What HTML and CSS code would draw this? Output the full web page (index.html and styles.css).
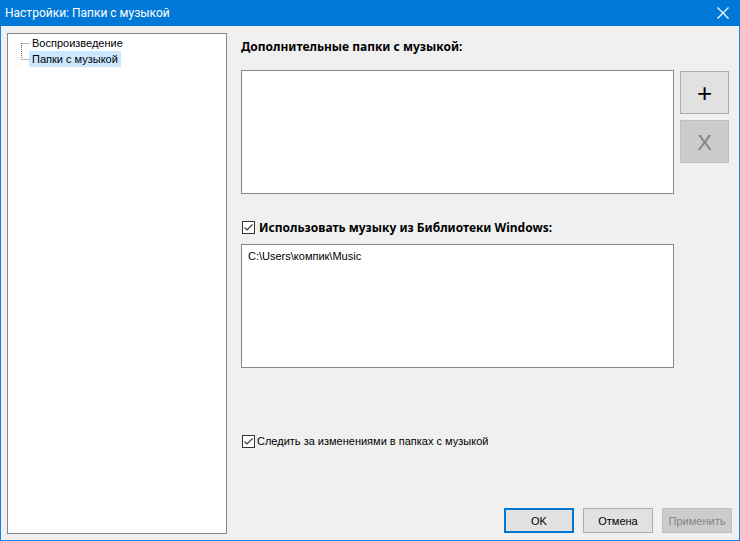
FILE: index.html
```html
<!DOCTYPE html>
<html lang="ru">
<head>
<meta charset="utf-8">
<title>Настройки: Папки с музыкой</title>
<link rel="stylesheet" href="styles.css">
</head>
<body>
<div class="window">
  <div class="titlebar">
    <span class="title">Настройки: Папки с музыкой</span>
    <svg class="close" width="12" height="12" viewBox="0 0 12 12"><path d="M0.5 0.5 L11.5 11.5 M11.5 0.5 L0.5 11.5" stroke="#fff" stroke-width="1.2" fill="none"/></svg>
  </div>
  <div class="content">
    <div class="tree">
      <svg class="tree-lines" width="30" height="40" viewBox="0 0 30 40"><path d="M13.5 9 V25 M13.5 9.5 H22 M13.5 25.5 H22" stroke="#666" stroke-width="1" stroke-dasharray="1 1" fill="none"/></svg>
      <div class="tree-item">Воспроизведение</div>
      <div class="tree-item selected">Папки с музыкой</div>
    </div>
    <div class="main">
      <div class="heading">Дополнительные папки с музыкой:</div>
      <div class="list-row">
        <div class="listbox"></div>
        <div class="side-buttons">
          <div class="sq-btn">+</div>
          <div class="sq-btn disabled">X</div>
        </div>
      </div>
      <div class="check-row bold">
        <svg class="check" width="13" height="13" viewBox="0 0 13 13"><rect x="0.5" y="0.5" width="12" height="12" fill="#fff" stroke="#333"/><path d="M2.5 6.5 L5 9 L10.5 3.5" stroke="#333" stroke-width="1.1" fill="none"/></svg>
        <span>Использовать музыку из Библиотеки Windows:</span>
      </div>
      <div class="listbox second">
        <div class="path">C:\Users\компик\Music</div>
      </div>
      <div class="check-row small">
        <svg class="check" width="13" height="13" viewBox="0 0 13 13"><rect x="0.5" y="0.5" width="12" height="12" fill="#fff" stroke="#333"/><path d="M2.5 6.5 L5 9 L10.5 3.5" stroke="#333" stroke-width="1.1" fill="none"/></svg>
        <span>Следить за изменениями в папках с музыкой</span>
      </div>
      <div class="footer">
        <div class="btn default">OK</div>
        <div class="btn">Отмена</div>
        <div class="btn disabled">Применить</div>
      </div>
    </div>
  </div>
</div>
</body>
</html>
```
FILE: styles.css
```css
html, body {
  margin: 0;
  padding: 0;
  background: #f0f0f0;
}
body {
  font-family: "Liberation Sans", Arial, sans-serif;
  font-size: 11px;
  color: #000;
}
.window {
  width: 740px;
  height: 541px;
  box-sizing: border-box;
  border: 1px solid #1883d7;
  border-top: none;
  display: flex;
  flex-direction: column;
  background: #f0f0f0;
}
.titlebar {
  height: 26px;
  background: #0078d7;
  margin: 0 -1px;
  display: flex;
  align-items: center;
  padding: 0 11px 0 5px;
  color: #fff;
}
.title {
  flex: 1;
  font-family: Roboto, "Noto Sans", sans-serif;
  font-size: 12px;
  line-height: 26px;
}
.close {
  display: block;
}
.content {
  flex: 1;
  display: flex;
  padding: 7px 7px 0 6px;
}
.tree {
  position: relative;
  width: 220px;
  height: 501px;
  box-sizing: border-box;
  border: 1px solid #828790;
  background: #fff;
  padding: 1px 0 0 21px;
}
.tree-lines {
  position: absolute;
  left: 0;
  top: 0;
}
.tree-item {
  height: 16px;
  line-height: 16px;
  padding: 0 3px;
  display: table;
  white-space: nowrap;
}
.tree-item.selected {
  background: #cce8ff;
}
.main {
  width: 491px;
  margin-left: 14px;
  display: flex;
  flex-direction: column;
  height: 501px;
}
.heading {
  font-family: "Noto Sans", sans-serif;
  font-size: 12px;
  font-weight: bold;
  padding-top: 6px;
  line-height: 16px;
}
.list-row {
  display: flex;
  margin-top: 15px;
  gap: 6px;
}
.listbox {
  width: 433px;
  height: 124px;
  box-sizing: border-box;
  border: 1px solid #828790;
  background: #fff;
}
.side-buttons {
  display: flex;
  flex-direction: column;
  gap: 6px;
  margin-top: 1px;
}
.sq-btn {
  width: 49px;
  height: 43px;
  box-sizing: border-box;
  border: 1px solid #adadad;
  background: #e1e1e1;
  display: flex;
  align-items: center;
  justify-content: center;
  font-family: "Liberation Sans", sans-serif;
  font-size: 26px;
  line-height: 1;
  color: #000;
}
.sq-btn.disabled {
  background: #cccccc;
  border-color: #bfbfbf;
  color: #838383;
  font-size: 22px;
  padding-top: 2px;
}
.check-row {
  display: flex;
  align-items: center;
  height: 14px;
}
.check-row .check {
  display: block;
  margin-left: 1px;
}
.check-row.bold {
  margin-top: 26px;
  font-family: "Noto Sans", sans-serif;
  font-size: 12px;
  font-weight: bold;
  gap: 4px;
}
.check-row.small {
  margin-top: 66px;
  gap: 2px;
}
.listbox.second {
  margin-top: 10px;
}
.path {
  padding: 4px 0 0 6px;
  line-height: 15px;
}
.footer {
  margin-top: auto;
  margin-bottom: 1px;
  display: flex;
  justify-content: flex-end;
  gap: 9px;
}
.btn {
  width: 70px;
  height: 25px;
  box-sizing: border-box;
  border: 1px solid #adadad;
  background: #e1e1e1;
  display: flex;
  align-items: center;
  justify-content: center;
}
.btn.default {
  border: 2px solid #0078d7;
}
.btn.disabled {
  background: #cccccc;
  border-color: #bfbfbf;
  color: #838383;
}
```
